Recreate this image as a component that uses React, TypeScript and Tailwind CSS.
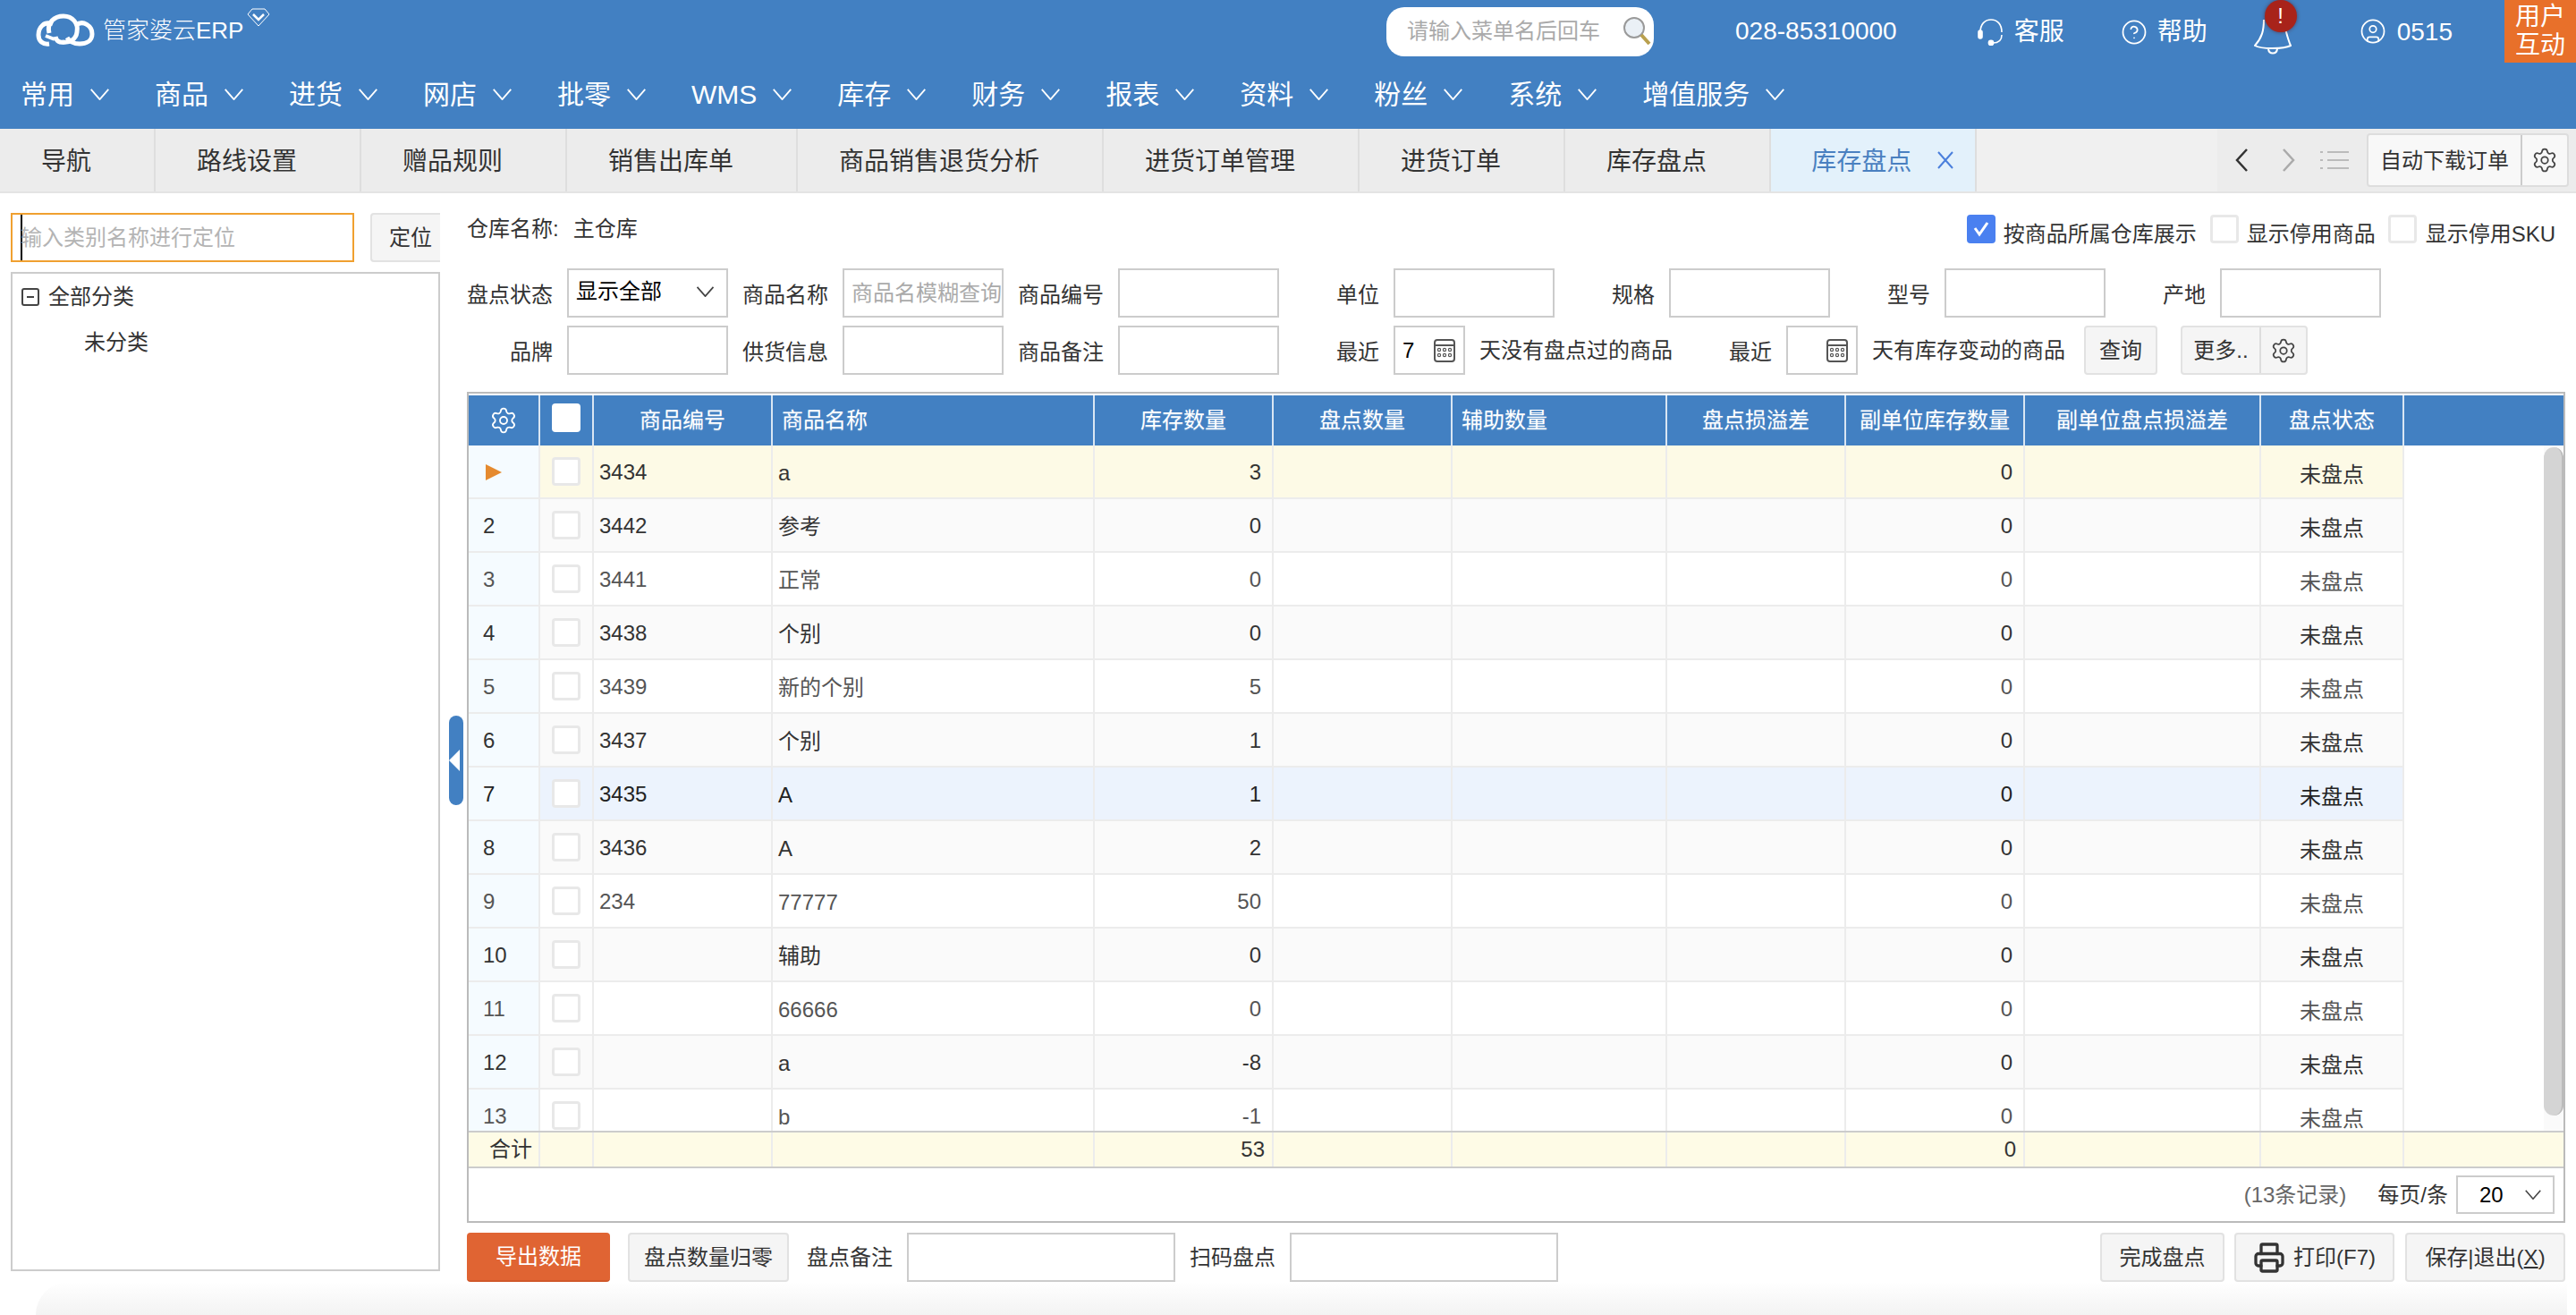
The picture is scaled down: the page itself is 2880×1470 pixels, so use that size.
import { CircleHelp, CircleUser, Printer, Settings } from 'lucide-react';

const NAV_ITEMS = ['常用', '商品', '进货', '网店', '批零', 'WMS', '库存', '财务', '报表', '资料', '粉丝', '系统', '增值服务'];
const TABS = ['导航', '路线设置', '赠品规则', '销售出库单', '商品销售退货分析', '进货订单管理', '进货订单', '库存盘点'];

// 表格列
const COLUMNS = [
  { label: '', width: 'w-[80px]', head: 'justify-center' },
  { label: '', width: 'w-[60px]', head: 'justify-center' },
  { label: '商品编号', width: 'w-[200px]', head: 'justify-center' },
  { label: '商品名称', width: 'w-[360px]', head: 'pl-[10px]' },
  { label: '库存数量', width: 'w-[200px]', head: 'justify-center' },
  { label: '盘点数量', width: 'w-[200px]', head: 'justify-center' },
  { label: '辅助数量', width: 'w-[240px]', head: 'pl-[10px]' },
  { label: '盘点损溢差', width: 'w-[200px]', head: 'justify-center' },
  { label: '副单位库存数量', width: 'w-[200px]', head: 'justify-center' },
  { label: '副单位盘点损溢差', width: 'w-[264px]', head: 'justify-center' },
  { label: '盘点状态', width: 'w-[160px]', head: 'justify-center' },
];

const ROWS = [
  { no: 1, code: '3434', name: 'a', qty: '3' },
  { no: 2, code: '3442', name: '参考', qty: '0' },
  { no: 3, code: '3441', name: '正常', qty: '0' },
  { no: 4, code: '3438', name: '个别', qty: '0' },
  { no: 5, code: '3439', name: '新的个别', qty: '5' },
  { no: 6, code: '3437', name: '个别', qty: '1' },
  { no: 7, code: '3435', name: 'A', qty: '1' },
  { no: 8, code: '3436', name: 'A', qty: '2' },
  { no: 9, code: '234', name: '77777', qty: '50' },
  { no: 10, code: '', name: '辅助', qty: '0' },
  { no: 11, code: '', name: '66666', qty: '0' },
  { no: 12, code: '', name: 'a', qty: '-8' },
  { no: 13, code: '', name: 'b', qty: '-1' },
];

const rowStyle = (no: number) => {
  if (no === 1) return 'bg-[#fdfae6] text-[#333]';
  if (no === 7) return 'bg-[#ecf3fd] text-[#222]';
  if (no % 2 === 0) return 'bg-[#fafafa] text-[#333]';
  return 'bg-white text-[#555]';
};

const Chevron = ({ className }: { className: string }) => (
  <svg className={className} viewBox="0 0 23 14" fill="none" stroke="currentColor" strokeWidth="2">
    <polyline points="1,1 11.5,13 22,1" />
  </svg>
);

const Logo = () => (
  <div className="flex items-start">
    <svg className="mt-[-2px] h-[37px] w-[66px] shrink-0" viewBox="0 0 66 37" fill="none" stroke="white" strokeWidth="5">
      <path d="M19 12 C9 8 3 16 3 24 C3 31 8 35 15 34" />
      <path d="M15 22 C12 10 21 3 31 3 C41 3 48 11 46 21 C45 29 38 33 30 32" />
      <path d="M45 13 C53 7 63 14 63 23 C63 31 56 34 49 34 C43 34 38 32 35 27" />
      <path d="M11 25 L21 29" strokeWidth="4" />
      <path d="M22 26 C23 31 27 33 31 32" />
    </svg>
    <span className="ml-[9px] mt-[-2px] text-[26px] leading-[38px] font-light whitespace-nowrap text-white">管家婆云ERP</span>
    <svg className="ml-[4px] mt-[-8px] h-[21px] w-[26px] shrink-0" viewBox="0 0 26 21" fill="none" stroke="white">
      <path d="M6 1 H20 L25 7 L13 20 L1 7 Z" strokeWidth="1" />
      <path d="M7 7 L13 13 L19 7" strokeWidth="2.5" />
    </svg>
  </div>
);

const Headset = () => (
  <svg className="mt-[2px] h-[30px] w-[30px] shrink-0" viewBox="0 0 30 30" fill="none" stroke="white" strokeWidth="1.6">
    <path d="M3 15 C3 6 8 1 15 1 C22 1 27 6 27 15" />
    <rect x="1" y="13" width="4" height="9" rx="2" fill="white" />
    <path d="M27 18 C27 24 23 27 17 27" />
    <circle cx="15" cy="27" r="2.6" fill="white" />
  </svg>
);

const Bell = () => (
  <div className="relative h-[42px] w-[42px] shrink-0">
    <svg className="absolute left-0 top-[6px] h-[42px] w-[42px]" viewBox="0 0 42 42" fill="none" stroke="white" strokeWidth="2">
      <path d="M11 2 C11 14 9 22 1 31 C8 35 33 35 41 31 C37 22 36 14 33 6" />
      <path d="M16 35 C17 41 25 41 26 35" />
    </svg>
    <div className="absolute left-[12px] top-[-14px] flex h-[36px] w-[36px] items-center justify-center rounded-full bg-[#a8231a] text-[24px] leading-none text-white shadow-[0_0_4px_rgba(90,20,20,0.6)]">
      !
    </div>
  </div>
);

const Magnifier = () => (
  <svg className="h-[34px] w-[32px] shrink-0" viewBox="0 0 32 34" fill="none">
    <circle cx="13" cy="13" r="11" fill="#eaf0f6" stroke="#9a9a9a" strokeWidth="2" />
    <line x1="21" y1="21" x2="30" y2="31" stroke="#b9a04e" strokeWidth="4" />
  </svg>
);

const CalendarIcon = () => (
  <svg className="h-[26px] w-[24px] shrink-0" viewBox="0 0 24 26" fill="none" stroke="#555" strokeWidth="2">
    <rect x="1" y="1" width="22" height="24" rx="3" />
    <line x1="1" y1="7" x2="23" y2="7" />
    {[12, 18].map(y =>
      [6, 12, 18].map(x => <circle key={`${x}-${y}`} cx={x} cy={y} r="1.6" strokeWidth="1.2" />)
    )}
  </svg>
);

const CheckBox = ({ checked, className = '' }: { checked?: boolean; className?: string }) =>
  checked ? (
    <div className={`flex h-[32px] w-[32px] shrink-0 items-center justify-center rounded-[4px] bg-[#4a80f0] ${className}`}>
      <svg className="h-[20px] w-[20px]" viewBox="0 0 20 20" fill="none" stroke="white" strokeWidth="3">
        <polyline points="3,9 8,16 17,3" />
      </svg>
    </div>
  ) : (
    <div className={`h-[32px] w-[32px] shrink-0 rounded-[4px] border-[3px] border-[#e8e8e8] bg-white ${className}`} />
  );

const GrayButton = ({ className = '', children }: { className?: string; children: React.ReactNode }) => (
  <button className={`flex h-[55px] shrink-0 items-center justify-center rounded-[4px] border-2 border-[#e2e2e2] bg-[#f5f5f5] text-[24px] text-[#333] ${className}`}>
    {children}
  </button>
);

const Field = ({ label, placeholder }: { label: string; placeholder?: string }) => (
  <div className="flex shrink-0 items-center gap-[16px]">
    <span className="mt-[4px] w-[96px] text-right text-[24px] text-[#333]">{label}</span>
    <input
      placeholder={placeholder}
      className="h-[55px] w-[180px] border-2 border-[#ccc] bg-white pl-[8px] text-[24px] placeholder:text-[#aaa]"
    />
  </div>
);

const DayField = ({ value, text }: { value: string; text: string }) => (
  <div className="flex shrink-0 items-center gap-[16px]">
    <span className="mt-[4px] w-[96px] text-right text-[24px] text-[#333]">最近</span>
    <div className="flex h-[55px] w-[80px] items-center justify-between border-2 border-[#ccc] bg-white pl-[8px] pr-[9px] text-[24px] text-black">
      <span>{value}</span>
      <CalendarIcon />
    </div>
    <span className="w-[215px] text-[24px] whitespace-nowrap text-[#333]">{text}</span>
  </div>
);

const App = () => {
  return (
    <div className="flex h-[1470px] w-[2880px] flex-col overflow-hidden bg-white font-['Liberation_Sans','Noto_Sans_CJK_SC',sans-serif] text-[#333]">
      {/* 顶部 */}
      <header className="h-[144px] shrink-0 bg-[#4280c2] text-white">
        <div className="flex h-[70px] items-center pl-[40px]">
          <Logo />
          <div className="ml-auto flex h-[55px] w-[299px] shrink-0 items-center justify-between rounded-[20px] bg-white pl-[23px] pr-[3px]">
            <span className="text-[24px] whitespace-nowrap text-[#aaa]">请输入菜单名后回车</span>
            <Magnifier />
          </div>
          <span className="ml-[91px] text-[28px] whitespace-nowrap">028-85310000</span>
          <div className="ml-[90px] flex items-center gap-[11px]">
            <Headset />
            <span className="mt-[2px] text-[28px] whitespace-nowrap">客服</span>
          </div>
          <div className="ml-[63px] flex items-center gap-[11px]">
            <CircleHelp className="mt-[2px] h-[30px] w-[30px] shrink-0" strokeWidth={1.4} />
            <span className="mt-[2px] text-[28px] whitespace-nowrap">帮助</span>
          </div>
          <div className="ml-[52px]">
            <Bell />
          </div>
          <div className="ml-[76px] flex items-center gap-[12px]">
            <CircleUser className="h-[30px] w-[30px] shrink-0" strokeWidth={1.4} />
            <span className="mt-[1px] text-[28px] whitespace-nowrap">0515</span>
          </div>
          <div className="ml-[58px] flex h-[70px] w-[80px] shrink-0 items-center justify-center bg-[#e8702a] text-center text-[28px] leading-[32px]">
            用户
            <br />
            互动
          </div>
        </div>
        <nav className="flex h-[70px] items-center gap-[50px] pl-[23px]">
          {NAV_ITEMS.map(item => (
            <div key={item} className="flex shrink-0 items-center gap-[17px]">
              <span className="text-[30px] whitespace-nowrap">{item}</span>
              <Chevron className="h-[13px] w-[23px]" />
            </div>
          ))}
        </nav>
      </header>

      {/* 页签 */}
      <div className="flex h-[72px] shrink-0 border-b-2 border-[#e4e4e4] bg-[#f0f0f0]">
        {TABS.map(tab => (
          <div
            key={tab}
            className="flex shrink-0 items-center border-r-2 border-[#dedede] bg-[#ececec] pl-[46px] pr-[70px] pt-[4px] text-[28px] whitespace-nowrap"
          >
            {tab}
          </div>
        ))}
        <div className="flex w-[230px] shrink-0 items-center border-r-2 border-[#dedede] bg-[#e3f1fb] pl-[45px] pt-[4px] text-[28px] whitespace-nowrap text-[#4a80c0]">
          库存盘点
          <svg className="ml-[29px] mt-[-4px] h-[20px] w-[18px]" viewBox="0 0 18 20" fill="none" stroke="#4a7fdc" strokeWidth="2">
            <path d="M1 1 L17 19 M17 1 L1 19" />
          </svg>
        </div>
        <div className="ml-auto flex w-[401px] shrink-0 items-center bg-[#ececec] pl-[19px]">
          <svg className="h-[26px] w-[16px]" viewBox="0 0 16 26" fill="none" stroke="#333" strokeWidth="2.5">
            <polyline points="14,1 3,13 14,25" />
          </svg>
          <svg className="ml-[37px] h-[26px] w-[16px]" viewBox="0 0 16 26" fill="none" stroke="#aaa" strokeWidth="2.5">
            <polyline points="2,1 13,13 2,25" />
          </svg>
          <svg className="ml-[27px] h-[24px] w-[32px]" viewBox="0 0 32 24" fill="none" stroke="#bbb" strokeWidth="2">
            <path d="M0 3 H3 M8 3 H32 M0 12 H3 M8 12 H32 M0 21 H3 M8 21 H32" />
          </svg>
          <div className="ml-[20px] flex h-[60px] shrink-0 rounded-[4px] border-2 border-[#ddd] bg-[#f8f8f8]">
            <div className="flex w-[172px] items-center justify-center border-r-2 border-[#ccc] pt-[2px] text-[24px] whitespace-nowrap">
              自动下载订单
            </div>
            <div className="flex w-[50px] items-center justify-center">
              <Settings className="h-[30px] w-[30px] text-[#444]" strokeWidth={1.4} />
            </div>
          </div>
        </div>
      </div>

      {/* 内容 */}
      <main className="relative flex h-[1217px] shrink-0">
        <aside className="ml-[12px] flex w-[480px] shrink-0 flex-col pt-[22px]">
          <div className="flex items-center">
            <div className="flex h-[55px] w-[384px] items-center overflow-hidden border-2 border-[#f0a030] pl-[9px]">
              <span className="h-full w-[2px] shrink-0 bg-black" />
              <input
                placeholder="输入类别名称进行定位"
                className="ml-[-2px] w-full bg-transparent text-[24px] placeholder:text-[#b4b4b4]"
              />
            </div>
            <button className="ml-[18px] flex h-[55px] w-[78px] items-center justify-end rounded-l-[4px] border-y-2 border-l-2 border-[#e2e2e2] bg-[#f5f5f5] pr-[9px] text-[24px]">
              定位
            </button>
          </div>
          <div className="mt-[11px] h-[1117px] border-2 border-[#ccc] pl-[10px] pt-[8px] text-[24px]">
            <div className="flex items-center gap-[10px]">
              <div className="flex h-[20px] w-[20px] items-center justify-center rounded-[3px] border-2 border-[#444]">
                <span className="h-[2px] w-[8px] bg-[#444]" />
              </div>
              <span>全部分类</span>
            </div>
            <div className="ml-[70px] mt-[15px]">未分类</div>
          </div>
        </aside>

        {/* 折叠按钮 */}
        <div className="absolute left-[502px] top-[584px] flex h-[100px] w-[16px] items-center rounded-[8px] bg-[#4280c2]">
          <span className="h-0 w-0 border-y-[12px] border-r-[12px] border-y-transparent border-r-white" />
        </div>

        <section className="ml-[30px] w-[2346px] shrink-0 pt-[24px]">
          <div className="flex h-[32px] items-center">
            <span className="text-[24px] whitespace-nowrap">仓库名称:</span>
            <span className="ml-[16px] text-[24px] whitespace-nowrap">主仓库</span>
            <CheckBox checked className="ml-auto" />
            <span className="ml-[9px] mt-[12px] text-[24px] whitespace-nowrap">按商品所属仓库展示</span>
            <CheckBox className="ml-[15px]" />
            <span className="ml-[9px] mt-[12px] text-[24px] whitespace-nowrap">显示停用商品</span>
            <CheckBox className="ml-[14px]" />
            <span className="ml-[10px] mr-[11px] mt-[12px] text-[24px] whitespace-nowrap">显示停用SKU</span>
          </div>

          <div className="mt-[28px] flex gap-[16px]">
            <div className="flex shrink-0 items-center gap-[16px]">
              <span className="mt-[4px] w-[96px] text-right text-[24px]">盘点状态</span>
              <div className="flex h-[55px] w-[180px] items-center justify-between border-2 border-[#ccc] pb-[4px] pl-[8px] pr-[13px] text-[24px] text-black">
                显示全部
                <Chevron className="h-[12px] w-[21px] text-[#444]" />
              </div>
            </div>
            <Field label="商品名称" placeholder="商品名模糊查询" />
            <Field label="商品编号" />
            <Field label="单位" />
            <Field label="规格" />
            <Field label="型号" />
            <Field label="产地" />
          </div>

          <div className="mt-[9px] flex gap-[16px]">
            <Field label="品牌" />
            <Field label="供货信息" />
            <Field label="商品备注" />
            <DayField value="7" text="天没有盘点过的商品" />
            <DayField value="" text="天有库存变动的商品" />
            <GrayButton className="ml-[6px] w-[82px]">查询</GrayButton>
            <div className="ml-[10px] flex h-[55px] shrink-0 rounded-[4px] border-2 border-[#e2e2e2] bg-[#f5f5f5]">
              <div className="flex w-[88px] items-center justify-center border-r-2 border-[#ddd] text-[24px] whitespace-nowrap">
                更多..
              </div>
              <div className="flex w-[50px] items-center justify-center">
                <Settings className="h-[30px] w-[30px] text-[#444]" strokeWidth={1.4} />
              </div>
            </div>
          </div>

          {/* 表格 */}
          <div className="mt-[19px] h-[929px] border-2 border-[#bbb] pt-[2px]">
            <div className="flex h-[56px] bg-[#4280c2] text-[24px] text-white">
              {COLUMNS.map((col, index) => (
                <div
                  key={index}
                  className={`flex shrink-0 items-center border-r-2 border-[#d9e6f3] whitespace-nowrap [text-shadow:0_1px_1px_rgba(255,255,255,0.3)] ${col.width} ${col.head}`}
                >
                  {index === 0 && <Settings className="h-[32px] w-[32px]" strokeWidth={1.4} />}
                  {index === 1 && <div className="mt-[-6px] h-[32px] w-[32px] rounded-[4px] bg-white" />}
                  {col.label}
                </div>
              ))}
            </div>

            <div className="flex h-[766px] overflow-hidden">
              <div className="w-[2164px] shrink-0">
                {ROWS.map(row => (
                  <div key={row.no} className={`flex h-[60px] border-b-2 border-[#ececec] text-[24px] ${rowStyle(row.no)}`}>
                    <div className="flex w-[80px] shrink-0 items-center border-r-2 border-[#ececec] bg-[#f5fbff] pl-[16px] pt-[2px]">
                      {row.no === 1 ? (
                        <span className="ml-[3px] h-0 w-0 border-y-[9px] border-l-[18px] border-y-transparent border-l-[#e58a2f]" />
                      ) : (
                        row.no
                      )}
                    </div>
                    <div className="flex w-[60px] shrink-0 items-center border-r-2 border-[#ececec] pl-[13px]">
                      <CheckBox />
                    </div>
                    <div className="flex w-[200px] shrink-0 items-center border-r-2 border-[#ececec] pl-[6px] pt-[2px]">{row.code}</div>
                    <div className="flex w-[360px] shrink-0 items-center border-r-2 border-[#ececec] pl-[6px] pt-[4px]">{row.name}</div>
                    <div className="flex w-[200px] shrink-0 items-center justify-end border-r-2 border-[#ececec] pr-[12px] pt-[2px]">{row.qty}</div>
                    <div className="w-[200px] shrink-0 border-r-2 border-[#ececec]" />
                    <div className="w-[240px] shrink-0 border-r-2 border-[#ececec]" />
                    <div className="w-[200px] shrink-0 border-r-2 border-[#ececec]" />
                    <div className="flex w-[200px] shrink-0 items-center justify-end border-r-2 border-[#ececec] pr-[12px] pt-[2px]">0</div>
                    <div className="w-[264px] shrink-0 border-r-2 border-[#ececec]" />
                    <div className="flex w-[160px] shrink-0 items-center justify-center border-r-2 border-[#ececec] pt-[7px]">未盘点</div>
                  </div>
                ))}
              </div>
              {/* 滚动条 */}
              <div className="ml-auto flex w-[22px] shrink-0 bg-[#fafafa] pt-[2px]">
                <div className="h-[747px] w-full rounded-[11px] border-r-2 border-[#bbb] bg-[#d4d4d4]" />
              </div>
            </div>

            <div className="flex h-[42px] border-y-2 border-[#ccc] bg-[#fefbe6] text-[24px]">
              <div className="flex w-[80px] shrink-0 items-center border-r-2 border-[#ececec] pl-[23px]">合计</div>
              <div className="w-[60px] shrink-0 border-r-2 border-[#ececec]" />
              <div className="w-[200px] shrink-0 border-r-2 border-[#ececec]" />
              <div className="w-[360px] shrink-0 border-r-2 border-[#ececec]" />
              <div className="flex w-[200px] shrink-0 items-center justify-end border-r-2 border-[#ececec] pr-[8px]">53</div>
              <div className="w-[200px] shrink-0 border-r-2 border-[#ececec]" />
              <div className="w-[240px] shrink-0 border-r-2 border-[#ececec]" />
              <div className="w-[200px] shrink-0 border-r-2 border-[#ececec]" />
              <div className="flex w-[200px] shrink-0 items-center justify-end border-r-2 border-[#ececec] pr-[8px]">0</div>
              <div className="w-[264px] shrink-0 border-r-2 border-[#ececec]" />
              <div className="w-[160px] shrink-0 border-r-2 border-[#ececec]" />
            </div>

            <div className="flex h-[59px] items-center justify-end pr-[10px] text-[24px]">
              <span className="text-[#666]">(13条记录)</span>
              <span className="ml-[35px]">每页/条</span>
              <div className="ml-[9px] flex h-[43px] w-[110px] items-center justify-between border-2 border-[#ccc] pl-[24px] pr-[12px] text-black">
                20
                <Chevron className="h-[11px] w-[20px] text-[#444]" />
              </div>
            </div>
          </div>

          {/* 底部操作 */}
          <div className="mt-[11px] flex items-center">
            <button className="flex h-[55px] w-[160px] shrink-0 items-center justify-center rounded-[4px] border-b-2 border-[#d0582a] bg-[#e06433] text-[24px] text-white">
              导出数据
            </button>
            <GrayButton className="ml-[20px] w-[180px]">盘点数量归零</GrayButton>
            <span className="ml-[20px] text-[24px]">盘点备注</span>
            <input className="ml-[16px] h-[55px] w-[300px] border-2 border-[#ccc]" />
            <span className="ml-[16px] text-[24px]">扫码盘点</span>
            <input className="ml-[16px] h-[55px] w-[300px] border-2 border-[#ccc]" />
            <GrayButton className="ml-auto w-[139px]">完成盘点</GrayButton>
            <GrayButton className="ml-[11px] w-[179px] gap-[9px]">
              <Printer className="h-[36px] w-[36px] text-[#333]" strokeWidth={2.2} />
              打印(F7)
            </GrayButton>
            <GrayButton className="ml-[12px] w-[179px]">
              <span>
                保存|退出(<span className="underline">X</span>)
              </span>
            </GrayButton>
          </div>
        </section>
      </main>

      <div className="ml-[40px] mr-[10px] h-[37px] shrink-0 rounded-tl-[37px] bg-linear-to-b from-white to-[#f3f3f3]" />
    </div>
  );
};

export default App;
